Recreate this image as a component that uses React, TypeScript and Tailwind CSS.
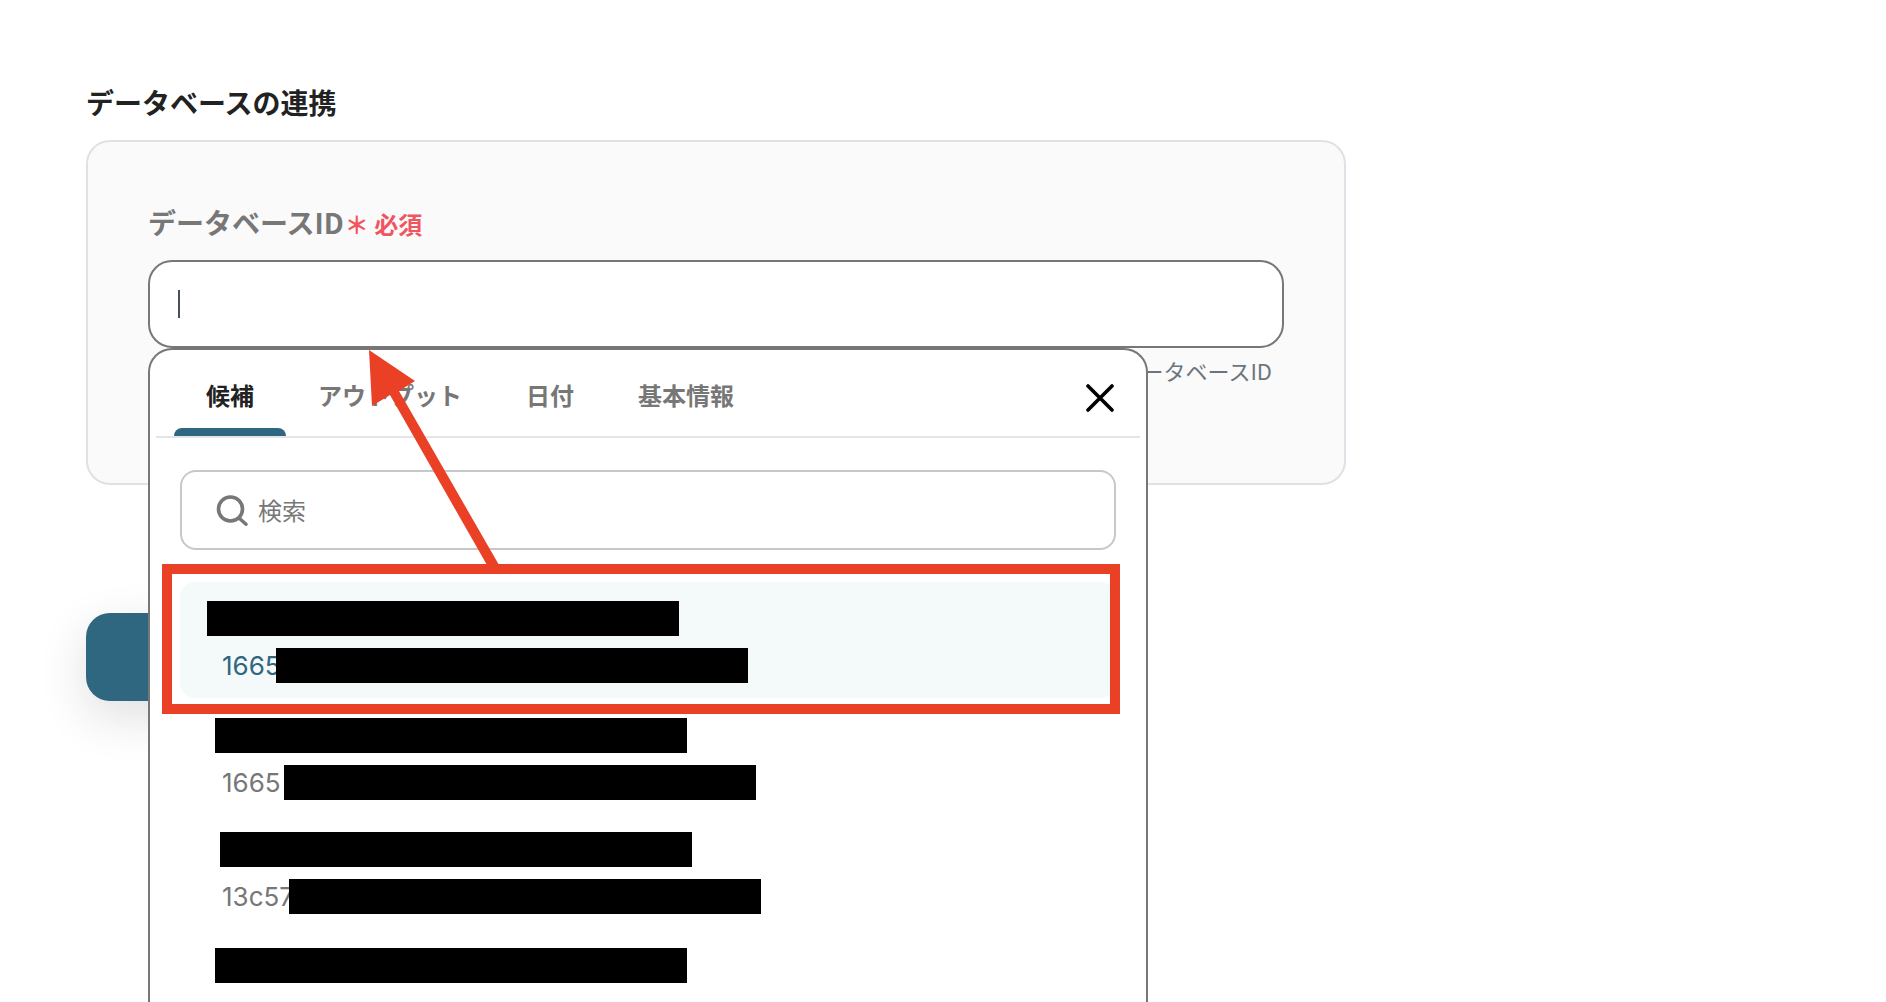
import { useState } from "react"
import clsx from "clsx"

type Candidate = {
  key: string
  id: string
  // where the two masks start, and how much of the id stays readable
  rowClass: string
  maskClass: string
  idClass: string
}

const tabs = ["候補", "アウトプット", "日付", "基本情報"]

const candidates: Candidate[] = [
  { key: "a", id: "1665", rowClass: "pt-[19px]", maskClass: "ml-[27px]", idClass: "w-[54px]" },
  { key: "b", id: "1665", rowClass: "pt-5", maskClass: "ml-[35px]", idClass: "w-[62px]" },
  { key: "c", id: "13c57", rowClass: "pt-[18px]", maskClass: "ml-10", idClass: "w-[67px]" },
  { key: "d", id: "", rowClass: "pt-[18px]", maskClass: "ml-[35px]", idClass: "w-[62px]" },
]

function Mask({ className }: { className?: string }) {
  return <span className={clsx("block h-[35px] w-[472px] shrink-0 bg-black", className)} />
}

function SearchIcon() {
  return (
    <svg width="32" height="32" viewBox="0 0 32 32" fill="none" stroke="#777777" className="shrink-0" aria-hidden="true">
      <circle cx="14.5" cy="15" r="12" strokeWidth="3.6" />
      <path d="M23 24 30 30.3" strokeLinecap="round" strokeWidth="3.4" />
    </svg>
  )
}

function CloseIcon() {
  return (
    <svg width="28" height="28" viewBox="0 0 28 28" fill="none" stroke="#000000" strokeWidth="3.6" strokeLinecap="round" aria-hidden="true">
      <path d="M2 2l24 24M26 2 2 26" />
    </svg>
  )
}

function CandidateItem({ item, selected }: { item: Candidate; selected: boolean }) {
  return (
    <li>
      <button
        type="button"
        aria-label="データベースの候補"
        className={clsx(
          "flex h-[116px] w-full flex-col gap-3 rounded-2xl text-left",
          item.rowClass,
          selected ? "bg-[#f4f9f9] text-[#2f6680]" : "text-[#777777]"
        )}
      >
        <Mask className={item.maskClass} />
        {item.id && (
          <span className="ml-[42px] flex items-center">
            <span className={clsx("shrink-0 font-['Inter',sans-serif] text-[26px] leading-[35px]", item.idClass)}>
              {item.id}
            </span>
            <Mask />
          </span>
        )}
      </button>
    </li>
  )
}

// Red frame around the first candidate, with an arrow up to the field
function Annotation() {
  return (
    <>
      <div className="pointer-events-none absolute -left-[18px] -right-1 -top-[18px] h-[150px] border-[10px] border-[#ea4025]" />
      <svg
        width="140"
        height="220"
        viewBox="0 0 140 220"
        fill="#ea4025"
        className="pointer-events-none absolute -top-[232px] left-[189px]"
        aria-hidden="true"
      >
        <path d="M0 0 46 31 30 41 130 215 118 215 21 45 3 56Z" />
      </svg>
    </>
  )
}

function CandidatePopover() {
  const [active, setActive] = useState(tabs[0])

  return (
    <div className="absolute left-0 top-full z-10 w-[1000px] rounded-t-3xl border-2 border-b-0 border-[#777777] bg-white px-1.5">
      <div className="flex h-[88px] items-stretch border-b-2 border-[#e5e5e5] pl-[18px] pr-[26px]">
        <div role="tablist" className="flex">
          {tabs.map((tab) => (
            <button
              key={tab}
              type="button"
              role="tab"
              aria-selected={tab === active}
              onClick={() => setActive(tab)}
              className={clsx(
                "flex flex-col justify-between px-8 pt-[27px] text-2xl leading-9 font-bold",
                tab === active ? "text-[#222222]" : "text-[#777777]"
              )}
            >
              {tab}
              {tab === active && <span className="-mx-8 block h-2 self-stretch rounded-t-lg bg-[#2f6680]" />}
            </button>
          ))}
        </div>
        <button type="button" aria-label="閉じる" className="mt-2.5 ml-auto">
          <CloseIcon />
        </button>
      </div>

      <div className="px-6 pt-8">
        <label className="flex h-20 items-center gap-2.5 rounded-2xl border-2 border-[#c8c8c8] px-[34px]">
          <SearchIcon />
          <input
            type="search"
            placeholder="検索"
            aria-label="検索"
            className="min-w-0 flex-1 bg-transparent text-2xl outline-none placeholder:text-[#777777]"
          />
        </label>

        <div className="relative mt-8">
          <ul>
            {candidates.map((item, index) => (
              <CandidateItem key={item.key} item={item} selected={index === 0} />
            ))}
          </ul>
          <Annotation />
        </div>
      </div>
    </div>
  )
}

export default function App() {
  return (
    <main className="h-screen overflow-hidden bg-white px-[86px] pt-[81px] font-['Noto_Sans_CJK_JP',sans-serif] text-[#222222]">
      <div className="max-w-[1260px]">
        <h2 className="mb-[17px] text-[28px] leading-[42px] font-bold">データベースの連携</h2>

        <section className="rounded-3xl border-2 border-[#dee2e6] bg-[#fafafa] px-[60px] pt-[59px] pb-[60px]">
          <div className="mb-[17px] flex items-center gap-px">
            <label htmlFor="database-id" className="text-[28px] leading-[42px] font-bold text-[#777777]">
              データベースID
            </label>
            <span className="pt-1 text-2xl font-bold text-[#f05560]">＊ 必須</span>
          </div>

          <div className="relative">
            <div className="flex h-[88px] items-center rounded-3xl border-2 border-[#777777] bg-white px-7">
              <span className="h-7 w-0.5 bg-[#495057]" />
              <input id="database-id" type="text" className="min-w-0 flex-1 bg-transparent text-[28px] outline-none" />
            </div>
            <CandidatePopover />
          </div>

          <p className="mt-1.5 h-[69px] pr-3 text-right text-[22px] leading-8 text-[#6c757d]">データベースID</p>
        </section>

        <button
          type="button"
          aria-label="送信"
          className="mt-32 h-[88px] w-60 rounded-3xl bg-[#2f6680] shadow-[0_16px_48px_rgba(33,37,41,0.14)]"
        />
      </div>
    </main>
  )
}
